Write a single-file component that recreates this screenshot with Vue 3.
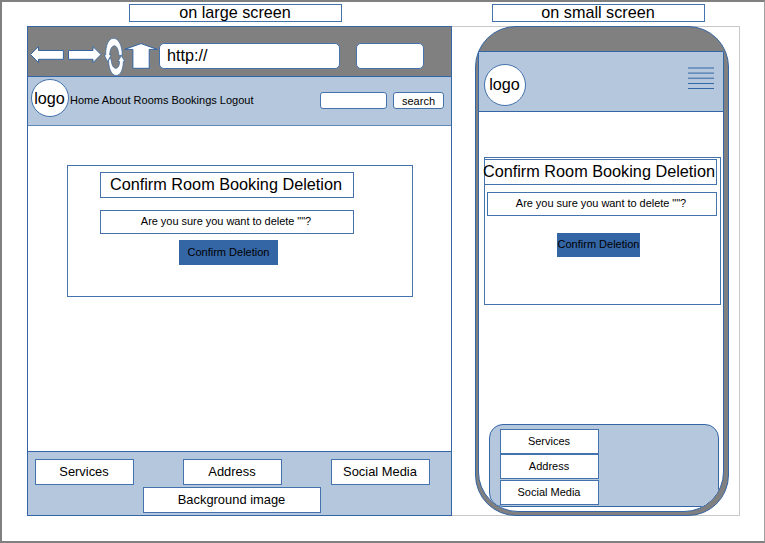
<script setup>
const links = ['Home', 'About', 'Rooms', 'Bookings', 'Logout']
const footerItems = ['Services', 'Address', 'Social Media']
</script>

<template>
  <div class="canvas">
    <div class="captions">
      <div class="box caption">on large screen</div>
      <div class="box caption">on small screen</div>
    </div>
    <div class="sheet">
      <section class="desktop">
        <div class="toolbar">
          <svg class="icons" width="132" height="48" viewBox="27 28 132 48">
            <path d="M30.500 54.500 38.500 46.600V50.500H63.400V59.300H38.500V62.700Z" />
            <path d="M101 54.500 93 46.600V50.500H68.500V59.300H93V62.700Z" />
            <path class="thin" d="M104.300 55H105.700C105.600 45 108.600 38.300 113.500 38.300C118.500 38.300 122 45 122.300 55L119 55.800C118.500 49.500 116.800 45.800 114.400 45.800C111.700 45.800 109.800 50 109.700 55H111.200L107.500 61.600Z" />
            <path class="thin" d="M124.800 61.500H123.300C123.200 69.500 120.500 75.500 116.200 75.500C111.700 75.500 108.500 69 108.600 59.500L111 58.500C111.400 64.500 113.200 68.300 115.700 68.300C118.100 68.300 119.600 65.500 119.500 61.500H118L121.300 55.600Z" />
            <path d="M141 43.600 157.300 49.400H149.200V68.300H132.900V49.400H124.600Z" />
          </svg>
          <div class="box url">http://</div>
          <div class="box extra"></div>
        </div>
        <header class="site-header">
          <div class="box logo">logo</div>
          <nav>
            <span v-for="l in links" :key="l">{{ l + ' ' }}</span>
          </nav>
          <div class="box search-field"></div>
          <div class="box search-button">search</div>
        </header>
        <main>
          <div class="box card">
            <div class="box heading">Confirm Room Booking Deletion</div>
            <div class="box question">Are you sure you want to delete ""?</div>
            <div class="box confirm">Confirm Deletion</div>
          </div>
        </main>
        <footer class="site-footer">
          <div class="footer-row">
            <div v-for="f in footerItems" :key="f" class="box footer-item">{{ f }}</div>
          </div>
          <div class="box background">Background image</div>
        </footer>
      </section>
      <section class="phone">
        <div class="screen">
          <header class="phone-header">
            <div class="box logo">logo</div>
            <svg class="menu" width="26" height="24" viewBox="0 0 26 24">
              <path d="M0 2H26M0 7.100H26M0 12.200H26M0 17.500H26M0 22.500H26" />
            </svg>
          </header>
          <div class="box card small">
            <div class="box heading">Confirm Room Booking Deletion</div>
            <div class="box question">Are you sure you want to delete ""?</div>
            <div class="box confirm">Confirm Deletion</div>
          </div>
          <footer class="phone-footer">
            <div v-for="f in footerItems" :key="f" class="box footer-item">{{ f }}</div>
          </footer>
        </div>
      </section>
    </div>
  </div>
</template>

<style>
body {
  margin: 0;
  background: #fff;
}
</style>

<style scoped>
* {
  box-sizing: border-box;
}
.canvas {
  width: 765px;
  height: 543px;
  overflow: hidden;
  border: 2px solid #808080;
  border-right: 1px solid #a0a0a0;
  background: #fff;
  font-family: 'Liberation Sans', Arial, sans-serif;
  font-size: 11px;
  color: #000;
}
.box {
  display: flex;
  align-items: center;
  justify-content: center;
  flex: none;
  border: 1px solid #4472ac;
  background: #fff;
  white-space: nowrap;
}
.caption,
.heading,
.question,
.confirm,
.footer-item,
.background {
  padding-bottom: 2px;
}
.captions {
  display: flex;
  gap: 150px;
  padding: 2px 0 0 127px;
}
.caption {
  width: 213px;
  height: 18px;
  padding-right: 1px;
  font-size: 16.2px;
}
.sheet {
  display: flex;
  width: 713px;
  height: 490px;
  margin: 4px 0 0 25px;
  border: 1px solid #c8c8c8;
  border-left: 0;
}
.desktop {
  display: flex;
  flex-direction: column;
  flex: none;
  width: 425px;
  height: 490px;
  margin-top: -1px;
  border: 1px solid #3465a4;
}
.toolbar {
  display: flex;
  align-items: flex-start;
  height: 50px;
  background: #808080;
  border-bottom: 1px solid #3465a4;
}
.icons {
  flex: none;
  margin: 1px 0 0 -1px;
}
.icons path {
  fill: #fff;
  stroke: #3465a4;
  stroke-width: 1;
}
.icons .thin {
  stroke-width: 0.7;
}
.url {
  width: 181px;
  height: 26px;
  margin-top: 16px;
  padding: 0 0 1px 7px;
  justify-content: flex-start;
  border-radius: 5px;
  font-size: 16.2px;
}
.extra {
  width: 68px;
  height: 26px;
  margin: 16px 0 0 16px;
  border-radius: 5px;
}
.site-header {
  display: flex;
  align-items: flex-start;
  height: 49px;
  padding-left: 3px;
  background: #b4c7dc;
  border-bottom: 1px solid #6288b9;
}
.logo {
  width: 38px;
  height: 38px;
  padding-right: 1px;
  border-radius: 50%;
  font-size: 16.2px;
}
.site-header .logo {
  margin-top: 2px;
}
nav {
  width: 251px;
  padding: 17px 0 0 1px;
  white-space: pre;
  line-height: 13px;
}
.search-field {
  width: 67px;
  height: 17px;
  margin-top: 15px;
  border-radius: 3px;
}
.search-button {
  width: 51px;
  height: 17px;
  margin: 15px 0 0 6px;
  border-radius: 3px;
}
main {
  flex: 1;
  padding: 39px 0 0 39px;
}
.card {
  flex-direction: column;
  justify-content: flex-start;
  align-items: flex-start;
  width: 346px;
  height: 132px;
  padding: 6px 0 0 32px;
}
.heading {
  width: 254px;
  height: 26px;
  padding-right: 2px;
  font-size: 16.25px;
}
.question {
  width: 254px;
  height: 24px;
  margin-top: 12px;
  padding-right: 2px;
  letter-spacing: -0.04px;
}
.confirm {
  width: 99px;
  height: 25px;
  margin: 6px 0 0 79px;
  background: #3465a4;
  border-color: #3465a4;
}
.site-footer {
  height: 64px;
  padding: 7px 0 0 7px;
  background: #b4c7dc;
  border-top: 1px solid #3465a4;
}
.footer-row {
  display: flex;
  justify-content: space-between;
  width: 395px;
}
.footer-item {
  width: 99px;
  height: 26px;
  padding-right: 1px;
}
.site-footer .footer-item,
.background {
  font-size: 12.9px;
}
.background {
  width: 178px;
  height: 26px;
  margin: 2px 0 0 108px;
  padding-right: 1px;
}
.phone {
  flex: none;
  width: 254px;
  height: 490px;
  margin: -1px 0 0 23px;
  padding: 24px 4px 3px 2px;
  border: 1px solid #3465a4;
  border-radius: 41px;
  background: #808080;
}
.screen {
  display: flex;
  flex-direction: column;
  height: 461px;
  overflow: hidden;
  border: 1px solid #3465a4;
  border-radius: 0 0 40px 40px;
  background: #fff;
}
.phone-header {
  display: flex;
  flex: none;
  justify-content: space-between;
  align-items: flex-start;
  height: 60px;
  padding: 12px 9px 0 5px;
  background: #b4c7dc;
  border-bottom: 1px solid #3465a4;
}
.phone-header .logo {
  width: 42px;
  height: 42px;
  padding-bottom: 1px;
}
.menu {
  margin-top: 2px;
}
.menu path {
  fill: none;
  stroke: #3465a4;
  stroke-width: 1;
}
.card.small {
  width: 237px;
  height: 148px;
  margin: 45px 0 0 5px;
  padding: 1px 0 0;
}
.small .heading {
  width: 233px;
  height: 26px;
  margin-left: -1px;
  padding-right: 3px;
}
.small .question {
  width: 230px;
  margin: 7px 0 0 2px;
}
.small .confirm {
  width: 83px;
  height: 24px;
  margin: 17px 0 0 72px;
}
.phone-footer {
  flex: none;
  width: 230px;
  height: 83px;
  margin: 119px 0 0 10px;
  padding: 4px 0 0 10px;
  border: 1px solid #3465a4;
  border-radius: 14px;
  background: #b4c7dc;
}
.phone-footer .footer-item {
  height: 25px;
}
.phone-footer .footer-item:last-child {
  margin-top: 1px;
}
</style>
